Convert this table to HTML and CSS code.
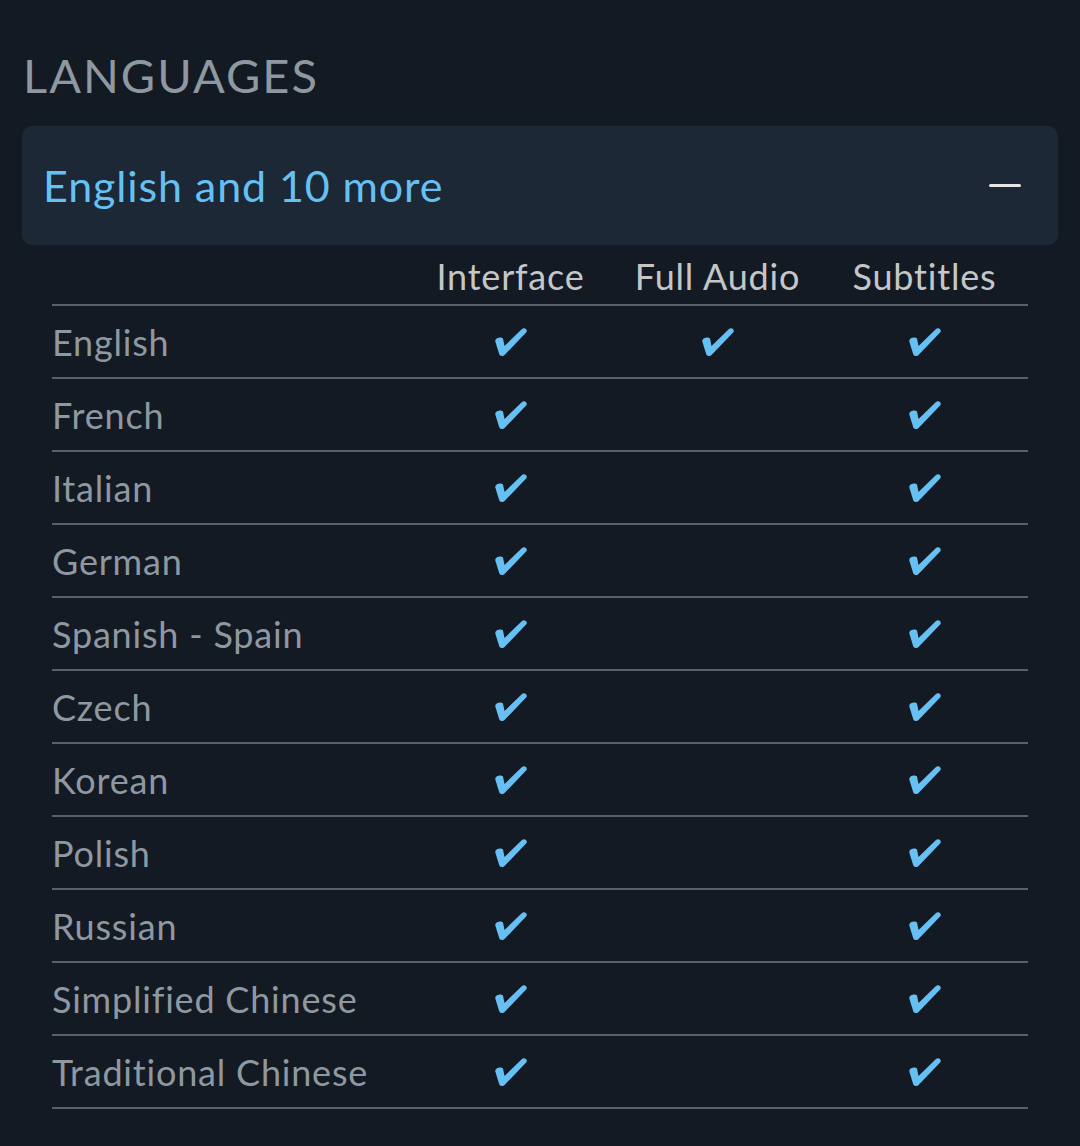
FILE: index.html
```html
<!DOCTYPE html>
<html lang="en">
<head>
<meta charset="utf-8">
<title>Languages</title>
<link rel="stylesheet" href="styles.css">
</head>
<body>
<section class="langs">
  <h2 class="title">LANGUAGES</h2>
  <div class="summary">
    <span class="summary-text">English and 10 more</span>
    <span class="minus"></span>
  </div>
  <div class="table">
    <div class="row head">
      <div class="cell name"></div>
      <div class="cell">Interface</div>
      <div class="cell">Full Audio</div>
      <div class="cell">Subtitles</div>
    </div>
    <div class="row"><div class="cell name">English</div><div class="cell"><svg class="chk" viewBox="0 0 34 30"><path d="M1.5 13C2 10.5 7 9.5 9 11.5L10.5 19L28 2C30 0.2 33.6 1.8 32.6 5L11 27.5C9 29.8 5.5 29.5 5 26.5L1.3 14.5C1.2 14 1.3 13.5 1.5 13Z"/></svg></div><div class="cell"><svg class="chk" viewBox="0 0 34 30"><path d="M1.5 13C2 10.5 7 9.5 9 11.5L10.5 19L28 2C30 0.2 33.6 1.8 32.6 5L11 27.5C9 29.8 5.5 29.5 5 26.5L1.3 14.5C1.2 14 1.3 13.5 1.5 13Z"/></svg></div><div class="cell"><svg class="chk" viewBox="0 0 34 30"><path d="M1.5 13C2 10.5 7 9.5 9 11.5L10.5 19L28 2C30 0.2 33.6 1.8 32.6 5L11 27.5C9 29.8 5.5 29.5 5 26.5L1.3 14.5C1.2 14 1.3 13.5 1.5 13Z"/></svg></div></div>
    <div class="row"><div class="cell name">French</div><div class="cell"><svg class="chk" viewBox="0 0 34 30"><path d="M1.5 13C2 10.5 7 9.5 9 11.5L10.5 19L28 2C30 0.2 33.6 1.8 32.6 5L11 27.5C9 29.8 5.5 29.5 5 26.5L1.3 14.5C1.2 14 1.3 13.5 1.5 13Z"/></svg></div><div class="cell"></div><div class="cell"><svg class="chk" viewBox="0 0 34 30"><path d="M1.5 13C2 10.5 7 9.5 9 11.5L10.5 19L28 2C30 0.2 33.6 1.8 32.6 5L11 27.5C9 29.8 5.5 29.5 5 26.5L1.3 14.5C1.2 14 1.3 13.5 1.5 13Z"/></svg></div></div>
    <div class="row"><div class="cell name">Italian</div><div class="cell"><svg class="chk" viewBox="0 0 34 30"><path d="M1.5 13C2 10.5 7 9.5 9 11.5L10.5 19L28 2C30 0.2 33.6 1.8 32.6 5L11 27.5C9 29.8 5.5 29.5 5 26.5L1.3 14.5C1.2 14 1.3 13.5 1.5 13Z"/></svg></div><div class="cell"></div><div class="cell"><svg class="chk" viewBox="0 0 34 30"><path d="M1.5 13C2 10.5 7 9.5 9 11.5L10.5 19L28 2C30 0.2 33.6 1.8 32.6 5L11 27.5C9 29.8 5.5 29.5 5 26.5L1.3 14.5C1.2 14 1.3 13.5 1.5 13Z"/></svg></div></div>
    <div class="row"><div class="cell name">German</div><div class="cell"><svg class="chk" viewBox="0 0 34 30"><path d="M1.5 13C2 10.5 7 9.5 9 11.5L10.5 19L28 2C30 0.2 33.6 1.8 32.6 5L11 27.5C9 29.8 5.5 29.5 5 26.5L1.3 14.5C1.2 14 1.3 13.5 1.5 13Z"/></svg></div><div class="cell"></div><div class="cell"><svg class="chk" viewBox="0 0 34 30"><path d="M1.5 13C2 10.5 7 9.5 9 11.5L10.5 19L28 2C30 0.2 33.6 1.8 32.6 5L11 27.5C9 29.8 5.5 29.5 5 26.5L1.3 14.5C1.2 14 1.3 13.5 1.5 13Z"/></svg></div></div>
    <div class="row"><div class="cell name">Spanish - Spain</div><div class="cell"><svg class="chk" viewBox="0 0 34 30"><path d="M1.5 13C2 10.5 7 9.5 9 11.5L10.5 19L28 2C30 0.2 33.6 1.8 32.6 5L11 27.5C9 29.8 5.5 29.5 5 26.5L1.3 14.5C1.2 14 1.3 13.5 1.5 13Z"/></svg></div><div class="cell"></div><div class="cell"><svg class="chk" viewBox="0 0 34 30"><path d="M1.5 13C2 10.5 7 9.5 9 11.5L10.5 19L28 2C30 0.2 33.6 1.8 32.6 5L11 27.5C9 29.8 5.5 29.5 5 26.5L1.3 14.5C1.2 14 1.3 13.5 1.5 13Z"/></svg></div></div>
    <div class="row"><div class="cell name">Czech</div><div class="cell"><svg class="chk" viewBox="0 0 34 30"><path d="M1.5 13C2 10.5 7 9.5 9 11.5L10.5 19L28 2C30 0.2 33.6 1.8 32.6 5L11 27.5C9 29.8 5.5 29.5 5 26.5L1.3 14.5C1.2 14 1.3 13.5 1.5 13Z"/></svg></div><div class="cell"></div><div class="cell"><svg class="chk" viewBox="0 0 34 30"><path d="M1.5 13C2 10.5 7 9.5 9 11.5L10.5 19L28 2C30 0.2 33.6 1.8 32.6 5L11 27.5C9 29.8 5.5 29.5 5 26.5L1.3 14.5C1.2 14 1.3 13.5 1.5 13Z"/></svg></div></div>
    <div class="row"><div class="cell name">Korean</div><div class="cell"><svg class="chk" viewBox="0 0 34 30"><path d="M1.5 13C2 10.5 7 9.5 9 11.5L10.5 19L28 2C30 0.2 33.6 1.8 32.6 5L11 27.5C9 29.8 5.5 29.5 5 26.5L1.3 14.5C1.2 14 1.3 13.5 1.5 13Z"/></svg></div><div class="cell"></div><div class="cell"><svg class="chk" viewBox="0 0 34 30"><path d="M1.5 13C2 10.5 7 9.5 9 11.5L10.5 19L28 2C30 0.2 33.6 1.8 32.6 5L11 27.5C9 29.8 5.5 29.5 5 26.5L1.3 14.5C1.2 14 1.3 13.5 1.5 13Z"/></svg></div></div>
    <div class="row"><div class="cell name">Polish</div><div class="cell"><svg class="chk" viewBox="0 0 34 30"><path d="M1.5 13C2 10.5 7 9.5 9 11.5L10.5 19L28 2C30 0.2 33.6 1.8 32.6 5L11 27.5C9 29.8 5.5 29.5 5 26.5L1.3 14.5C1.2 14 1.3 13.5 1.5 13Z"/></svg></div><div class="cell"></div><div class="cell"><svg class="chk" viewBox="0 0 34 30"><path d="M1.5 13C2 10.5 7 9.5 9 11.5L10.5 19L28 2C30 0.2 33.6 1.8 32.6 5L11 27.5C9 29.8 5.5 29.5 5 26.5L1.3 14.5C1.2 14 1.3 13.5 1.5 13Z"/></svg></div></div>
    <div class="row"><div class="cell name">Russian</div><div class="cell"><svg class="chk" viewBox="0 0 34 30"><path d="M1.5 13C2 10.5 7 9.5 9 11.5L10.5 19L28 2C30 0.2 33.6 1.8 32.6 5L11 27.5C9 29.8 5.5 29.5 5 26.5L1.3 14.5C1.2 14 1.3 13.5 1.5 13Z"/></svg></div><div class="cell"></div><div class="cell"><svg class="chk" viewBox="0 0 34 30"><path d="M1.5 13C2 10.5 7 9.5 9 11.5L10.5 19L28 2C30 0.2 33.6 1.8 32.6 5L11 27.5C9 29.8 5.5 29.5 5 26.5L1.3 14.5C1.2 14 1.3 13.5 1.5 13Z"/></svg></div></div>
    <div class="row"><div class="cell name">Simplified Chinese</div><div class="cell"><svg class="chk" viewBox="0 0 34 30"><path d="M1.5 13C2 10.5 7 9.5 9 11.5L10.5 19L28 2C30 0.2 33.6 1.8 32.6 5L11 27.5C9 29.8 5.5 29.5 5 26.5L1.3 14.5C1.2 14 1.3 13.5 1.5 13Z"/></svg></div><div class="cell"></div><div class="cell"><svg class="chk" viewBox="0 0 34 30"><path d="M1.5 13C2 10.5 7 9.5 9 11.5L10.5 19L28 2C30 0.2 33.6 1.8 32.6 5L11 27.5C9 29.8 5.5 29.5 5 26.5L1.3 14.5C1.2 14 1.3 13.5 1.5 13Z"/></svg></div></div>
    <div class="row"><div class="cell name">Traditional Chinese</div><div class="cell"><svg class="chk" viewBox="0 0 34 30"><path d="M1.5 13C2 10.5 7 9.5 9 11.5L10.5 19L28 2C30 0.2 33.6 1.8 32.6 5L11 27.5C9 29.8 5.5 29.5 5 26.5L1.3 14.5C1.2 14 1.3 13.5 1.5 13Z"/></svg></div><div class="cell"></div><div class="cell"><svg class="chk" viewBox="0 0 34 30"><path d="M1.5 13C2 10.5 7 9.5 9 11.5L10.5 19L28 2C30 0.2 33.6 1.8 32.6 5L11 27.5C9 29.8 5.5 29.5 5 26.5L1.3 14.5C1.2 14 1.3 13.5 1.5 13Z"/></svg></div></div>
  </div>
</section>
</body>
</html>
```

FILE: styles.css
```css
html, body {
  margin: 0;
  padding: 0;
  background: #131a23;
}
body {
  font-family: Lato, "Noto Sans", sans-serif;
  color: #8f98a0;
}
.langs {
  padding: 0 22px 30px 22px;
}
.title {
  margin: 0 0 26px 0;
  padding: 50px 0 0 1px;
  font-size: 47px;
  line-height: 50px;
  font-weight: 400;
  letter-spacing: 2px;
  color: #8f98a0;
}
.summary {
  height: 119px;
  background: #1c2836;
  border-radius: 10px;
  display: flex;
  align-items: center;
  justify-content: space-between;
  padding: 0 37px 0 21px;
}
.summary-text {
  font-size: 43px;
  letter-spacing: 0.9px;
  color: #66c0f4;
  line-height: 50px;
}
.minus {
  width: 32px;
  height: 3px;
  border-radius: 2px;
  background: #e6e6e6;
}
.table {
  margin: 0 30px;
}
.row {
  display: grid;
  grid-template-columns: 1fr 207px 207px 207px;
  height: 71px;
  border-bottom: 2px solid #5c6066;
  align-items: center;
}
.row.head {
  height: 59px;
  align-items: end;
}
.cell {
  font-size: 36px;
  letter-spacing: 0.8px;
  line-height: 44px;
  display: flex;
  justify-content: center;
  align-items: center;
}
.head .cell {
  color: #c4c6c8;
  padding-bottom: 6px;
}
.cell.name {
  justify-content: flex-start;
  color: #8f98a0;
}
.chk {
  width: 34px;
  height: 30px;
  fill: #66c0f4;
}
```
